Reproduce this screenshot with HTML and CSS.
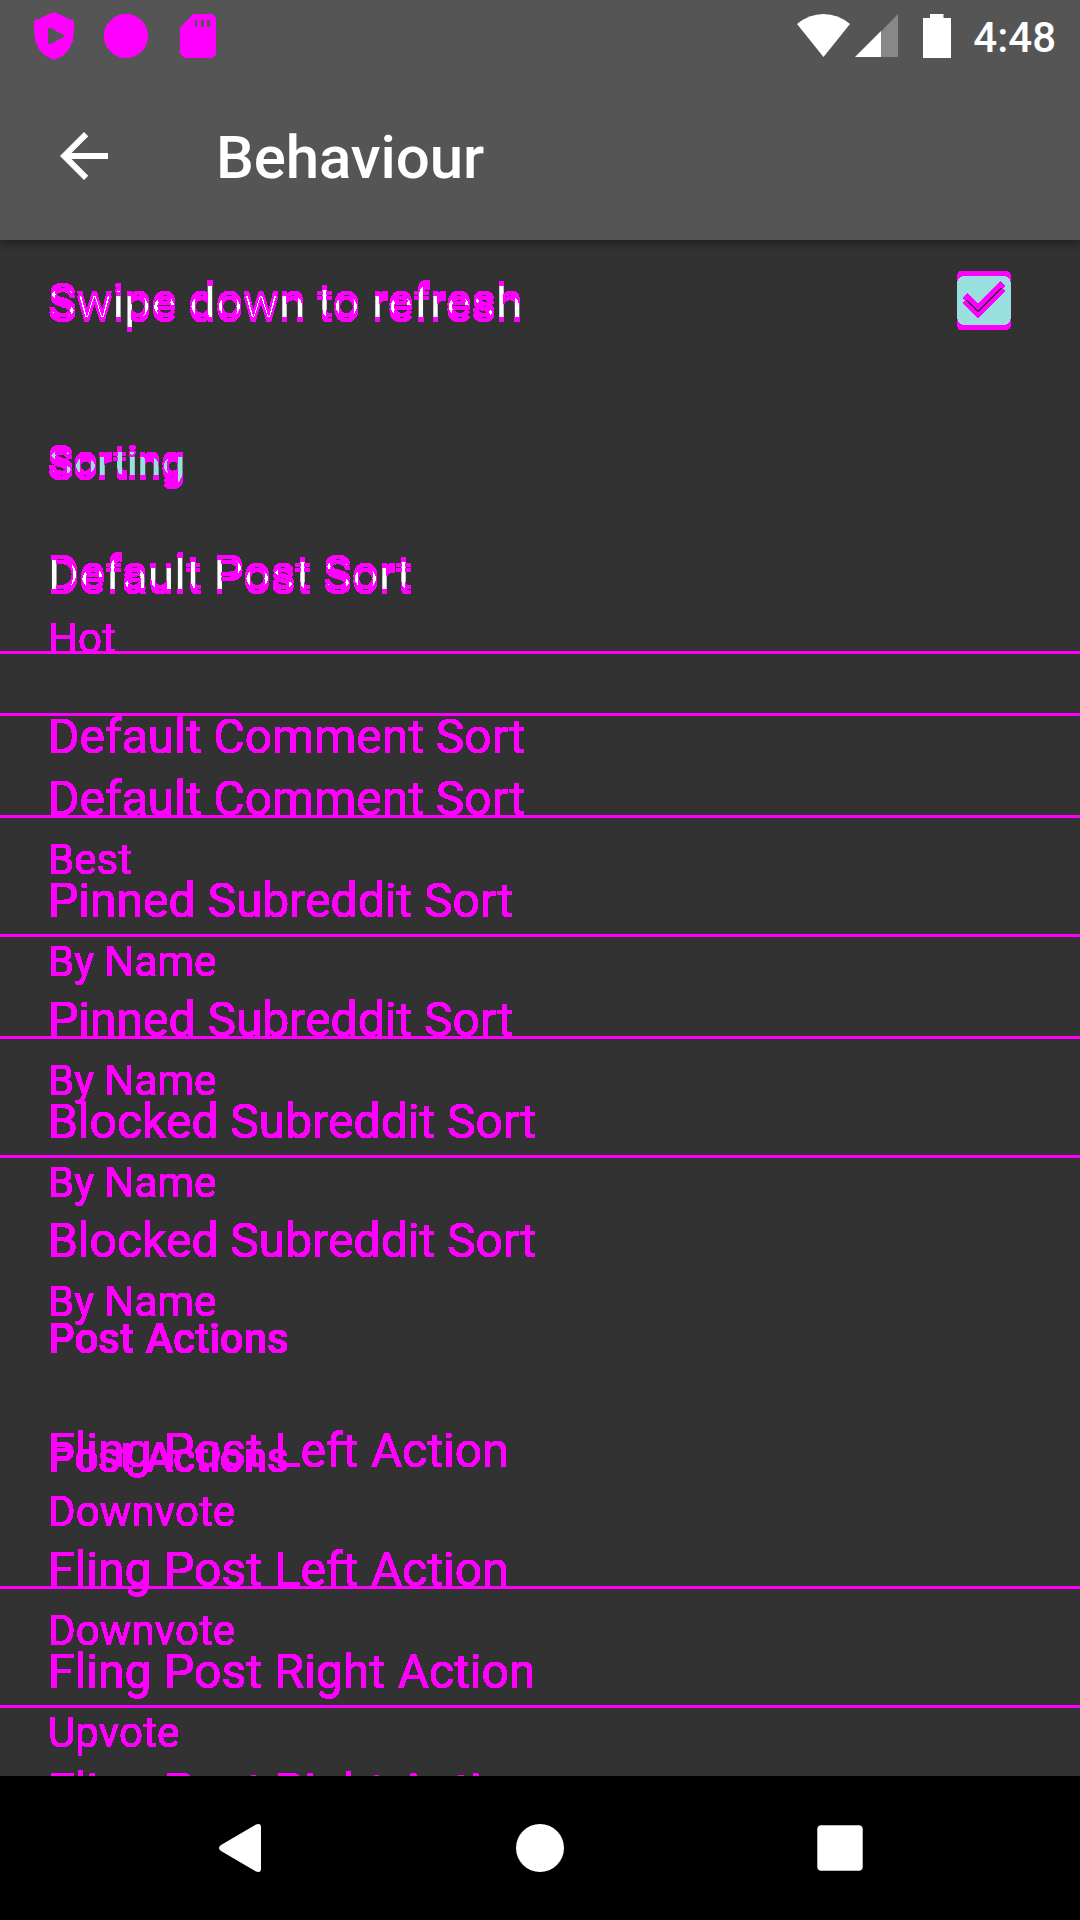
FILE: index.html
```html
<!DOCTYPE html>
<html lang="en">
<head>
<meta charset="utf-8">
<title>Behaviour</title>
<link rel="stylesheet" href="styles.css">
</head>
<body>
<svg class="defs" width="0" height="0" aria-hidden="true">
  <!-- Marks the pixels that differ between an element and its copy 5px lower -->
  <filter id="shifted" x="-5%" y="-30%" width="110%" height="160%" color-interpolation-filters="sRGB">
    <feOffset in="SourceGraphic" dy="5" result="copy"/>
    <feComposite in="SourceGraphic" in2="copy" operator="arithmetic" k2="100" k3="-100" result="above"/>
    <feComposite in="copy" in2="SourceGraphic" operator="arithmetic" k2="100" k3="-100" result="below"/>
    <feMerge result="changed"><feMergeNode in="above"/><feMergeNode in="below"/></feMerge>
    <feFlood flood-color="#f0f"/>
    <feComposite in2="changed" operator="in" result="marks"/>
    <feMerge><feMergeNode in="SourceGraphic"/><feMergeNode in="marks"/></feMerge>
  </filter>
  <!-- Hard edges, no antialiasing -->
  <filter id="solid" x="-5%" y="-30%" width="110%" height="160%" color-interpolation-filters="sRGB">
    <feComponentTransfer><feFuncA type="linear" slope="100"/></feComponentTransfer>
  </filter>
</svg>
<div class="screen">
  <header class="top">
    <div class="status">
      <svg class="notes" width="182" height="48" viewBox="34 12 182 48">
        <path fill-rule="evenodd" d="M54 12L74 21V32C74 46 66 56 54 60C42 56 34 46 34 32V21ZM48 29V43Q49 45 51 44L63 37.500Q65 36 63 34.500L51 28Q49 27 48 29Z"/>
        <circle cx="126" cy="36" r="22"/>
        <path fill-rule="evenodd" d="M193 14H212L216 18V54L212 58H184L180 54V27ZM195 20V27H197V20ZM201 20V27H204V20ZM207 20V27H210V20Z"/>
      </svg>
      <div class="system">
        <svg width="154" height="44" viewBox="797 14 154 44">
          <path d="M797 24Q809 14 823.500 14T850 24L823.500 57Z"/>
          <path class="faint" d="M881 31.500L898 14V57H881Z"/>
          <path d="M855 57L881 31V57Z"/>
          <path d="M930 14H943.500V18H951V58H923V18H930Z"/>
        </svg>
        <span class="clock">4:48</span>
      </div>
    </div>
    <div class="toolbar">
      <svg class="back" width="72" height="72" viewBox="0 0 24 24"><path d="M20 11H7.830l5.590-5.590L12 4l-8 8 8 8 1.410-1.410L7.830 13H20v-2z"/></svg>
      <h1>Behaviour</h1>
    </div>
  </header>
  <main class="list">
    <div class="setting">
      <p class="title shifted">Swipe down to refresh</p>
      <svg class="check shifted" width="54" height="54" viewBox="3 3 18 18"><path d="M19 3H5c-1.110 0-2 .9-2 2v14c0 1.100.89 2 2 2h14c1.110 0 2-.9 2-2V5c0-1.100-.89-2-2-2zm-9 14l-5-5 1.410-1.410L10 14.170l7.590-7.590L19 8l-9 9z"/></svg>
    </div>
    <h2 class="section shifted first">Sorting</h2>
    <p class="title shifted lead">Default Post Sort</p>
    <p class="summary solid hot">Hot</p>
    <hr class="through">
    <hr class="apart">
    <p class="title solid flush">Default Comment Sort</p>
    <p class="title solid again">Default Comment Sort</p>
    <hr class="under">
    <p class="summary solid">Best</p>
    <p class="title solid">Pinned Subreddit Sort</p>
    <hr>
    <p class="summary solid">By Name</p>
    <p class="title solid next">Pinned Subreddit Sort</p>
    <hr class="under">
    <p class="summary solid">By Name</p>
    <p class="title solid">Blocked Subreddit Sort</p>
    <hr>
    <p class="summary solid">By Name</p>
    <p class="title solid next">Blocked Subreddit Sort</p>
    <p class="summary solid">By Name</p>
    <h2 class="section solid">Post Actions</h2>
    <p class="title solid lead fling">Fling Post Left Action</p>
    <h2 class="section solid overlap">Post Actions</h2>
    <p class="summary solid vote">Downvote</p>
    <p class="title solid next fling">Fling Post Left Action</p>
    <hr class="under">
    <p class="summary solid vote">Downvote</p>
    <p class="title solid fling">Fling Post Right Action</p>
    <hr>
    <p class="summary solid vote">Upvote</p>
    <p class="title solid next fling">Fling Post Right Action</p>
  </main>
  <nav class="nav">
    <svg width="42" height="48" viewBox="0 0 42 48"><path d="M42 3V45Q42 49 37 47.500L2 27Q-2 24 2 21L37 .5Q42-1 42 3Z"/></svg>
    <svg width="48" height="48" viewBox="0 0 48 48"><circle cx="24" cy="24" r="24"/></svg>
    <svg width="46" height="46" viewBox="0 0 46 46"><rect x=".3" y=".3" width="45.400" height="45.400" rx="4"/></svg>
  </nav>
</div>
</body>
</html>
```
FILE: styles.css
```css
* { box-sizing: border-box; margin: 0; }
body { background: #323232; color: #fff; font-family: Roboto, sans-serif; }
svg { display: block; flex: none; fill: #fff; }
.defs { position: absolute; }

.screen { display: flex; flex-direction: column; width: 1080px; height: 1920px; overflow: hidden; }

.top { flex: none; height: 240px; background: #555; box-shadow: 0 3px 10px rgba(0, 0, 0, .4); z-index: 1; }
.status { display: flex; justify-content: space-between; align-items: flex-start; height: 72px; padding: 12px 24px 0 34px; }
.notes { fill: #f0f; shape-rendering: crispEdges; }
.system { display: flex; gap: 22px; padding-top: 2px; }
.faint { fill: #888; }
.clock { font-size: 42px; font-weight: 500; line-height: 48px; }
.toolbar { display: flex; align-items: center; gap: 96px; height: 168px; padding: 0 48px; }
.back { align-self: flex-start; margin-top: 48px; }
h1 { font-size: 60px; font-weight: 500; line-height: 72px; padding-top: 4px; letter-spacing: -.1px; }

.list { flex: 1; min-height: 0; overflow: hidden; padding-top: 31px; }
.setting { display: flex; justify-content: space-between; height: 54px; padding-right: 69px; }
.check { fill: #99dfdf; overflow: visible; }

.title { width: fit-content; height: 40px; margin: 3px 0 0 48px; padding-top: 2px; font-size: 48px; line-height: 38px; white-space: nowrap; }
.setting .title { margin-top: 9px; }
.summary, .section { width: fit-content; margin-left: 48px; font-size: 42px; line-height: 35px; white-space: nowrap; }
.summary { margin-top: 24px; font-weight: 400; }
.section { margin-top: 2px; font-weight: 500; word-spacing: 1px; }
.fling { word-spacing: .8px; }
.vote { letter-spacing: .12px; }
hr { height: 3px; margin: 14px 0 0; border: 0; background: #f0f; }
hr + .summary { margin-top: 7px; }
.under { margin-top: -3px; }
.under + .summary { margin-top: 24px; }

.first { margin-top: 118px; color: #99dfdf; }
.lead { margin-top: 74px; }
.hot { margin-top: 29px; }
.through { margin-top: -5px; }
.apart { margin-top: 59px; }
.flush { margin-top: 0; }
.again { margin-top: 22px; }
.next { margin-top: 20px; }
.overlap { margin-top: -30px; }
.overlap + .summary { margin-top: 19px; }

.shifted { filter: url(#shifted); }
.solid { color: #f0f; filter: url(#solid); }

.nav { flex: none; display: flex; align-items: center; gap: 254px; height: 144px; padding-left: 219px; background: #000; }
.nav circle { transform: translateX(1px); }
.nav svg { overflow: visible; }
```
